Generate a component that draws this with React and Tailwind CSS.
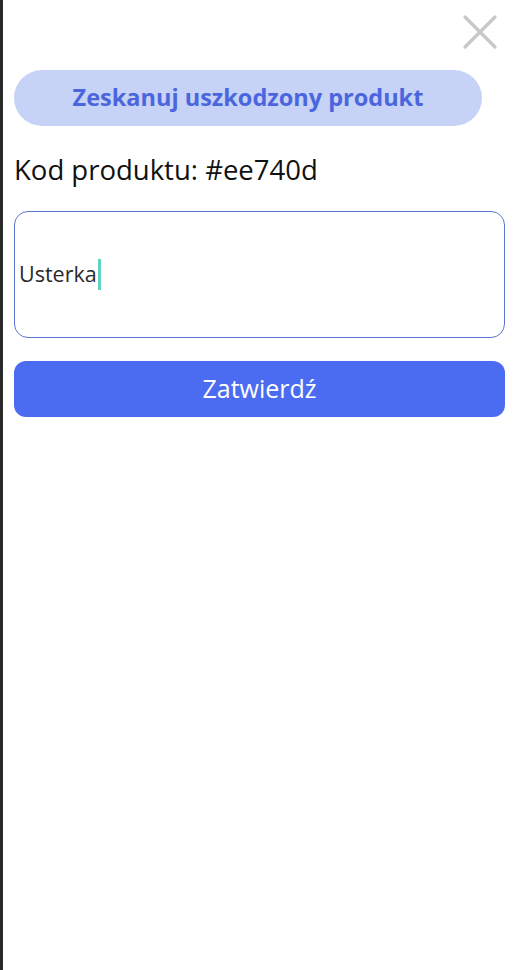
import React from 'react'

function CloseIcon() {
  return (
    <svg width="36" height="36" viewBox="0 0 36 36" fill="none">
      <path d="M3 3 L33 33 M33 3 L3 33" stroke="#c8c8c8" strokeWidth="3.2" strokeLinecap="round" />
    </svg>
  )
}

export default function App() {
  return (
    <div className="min-h-[970px] w-[514px] flex bg-white" style={{ fontFamily: '"Open Sans", "Noto Sans", sans-serif' }}>
      <div className="w-[3px] shrink-0 bg-[#2a2a2a]" />
      <div className="flex-1 flex flex-col pl-[11px] pr-[9px]">
        <div className="flex justify-end pt-[14px] pr-[7px]">
          <button className="w-[36px] h-[36px]">
            <CloseIcon />
          </button>
        </div>

        <button className="mt-[20px] w-[468px] h-[56px] rounded-full bg-[#c6d2f6] text-[#4b66dd] font-bold text-[23.5px]">
          Zeskanuj uszkodzony produkt
        </button>

        <div className="mt-[25px] text-[27.5px] leading-[38px] text-[#111]">Kod produktu: #ee740d</div>

        <div className="mt-[22px] h-[127px] rounded-[14px] border-[1.5px] border-[#5b76d6] flex items-center pl-[4px]">
          <span className="text-[21.5px] text-[#2a2a2a]">Usterka</span>
          <span className="w-[3px] h-[31px] bg-[#62d2c3] ml-[1px]" />
        </div>

        <button className="mt-[23px] h-[56px] rounded-[12px] bg-[#4b6cf0] text-white text-[25px]">
          Zatwierdź
        </button>
      </div>
    </div>
  )
}
